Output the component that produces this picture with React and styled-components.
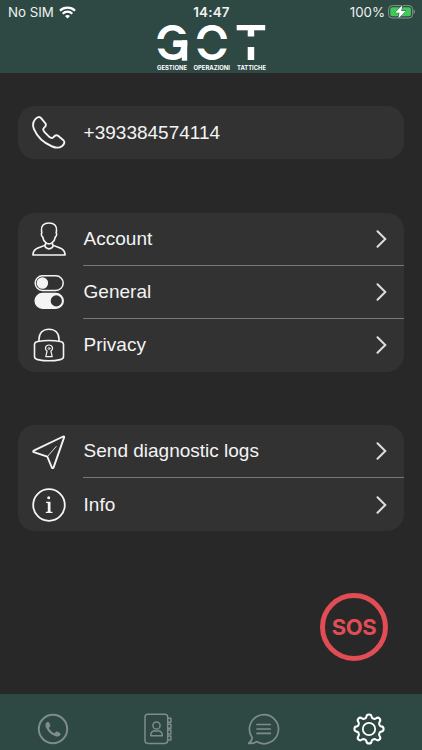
import React, { useState } from "react";
import styled, { createGlobalStyle } from "styled-components";

const GlobalStyle = createGlobalStyle`
  * {
    box-sizing: border-box;
  }
  body {
    margin: 0;
    background: #282828;
  }
`;

const Screen = styled.div`
  display: flex;
  flex-direction: column;
  width: 422px;
  height: 750px;
  overflow: hidden;
  background: #282828;
  font-family: "Liberation Sans", Arial, sans-serif;
  color: #f4f4f4;
`;

const Header = styled.header`
  display: flex;
  flex-direction: column;
  align-items: center;
  height: 73px;
  background: #2e4843;
`;

const StatusBar = styled.div`
  display: grid;
  grid-template-columns: 1fr auto 1fr;
  align-items: center;
  width: 100%;
  height: 24px;
  padding: 0 7px 0 8px;
  font-family: Inter, sans-serif;
  font-size: 13.3px;
  color: #eef2f1;
`;

const Carrier = styled.div`
  display: flex;
  align-items: center;
  gap: 5px;
`;

const Clock = styled.div`
  font-size: 13.4px;
  font-weight: 600;
  letter-spacing: 0.2px;
`;

const Battery = styled.div`
  display: flex;
  align-items: center;
  justify-content: flex-end;
  gap: 3px;
`;

const LogoMark = styled.svg`
  display: block;
  overflow: visible;
`;

const Content = styled.main`
  display: flex;
  flex: 1;
  flex-direction: column;
  gap: 53.5px;
  padding: 33px 18px 0;
`;

const Card = styled.section`
  border-radius: 17px;
  background: #323232;
`;

const Row = styled.div`
  display: flex;
  align-items: center;
  height: 53px;
  padding-left: 13px;
`;

const IconBox = styled.div`
  display: flex;
  align-items: center;
  justify-content: center;
  width: 35px;
  height: 36px;
  margin-right: 17px;
`;

const RowBody = styled.div`
  display: flex;
  flex: 1;
  align-items: center;
  justify-content: space-between;
  height: 100%;
  padding: 0 17px 0 0.6px;
  border-bottom: ${(props) => (props.$divider ? "1px solid #777" : "none")};
  font-size: 19px;
`;

const SosRow = styled.div`
  display: flex;
  justify-content: flex-end;
  margin-top: 8.5px;
  padding-right: 16px;
`;

const SosButton = styled.button`
  width: 68px;
  height: 68px;
  padding: 0;
  border: 5px solid #e24c55;
  border-radius: 50%;
  background: transparent;
  color: #e24c55;
  font-family: Inter, sans-serif;
  font-size: 22px;
  font-weight: 700;
  letter-spacing: -0.5px;
`;

const TabBar = styled.nav`
  display: grid;
  grid-template-columns: repeat(4, 1fr);
  height: 56px;
  padding-top: 19px;
  background: #2e4843;
`;

const Tab = styled.button`
  display: flex;
  justify-content: center;
  align-items: flex-start;
  padding: 0;
  border: none;
  background: none;
  color: ${(props) => (props.$active ? "#ffffff" : "#7f8c89")};
`;

const Icon = ({ size = 34, width = 1.6, children }) => (
  <svg
    width={size}
    height={size}
    viewBox={`0 0 ${size} ${size}`}
    fill="none"
    stroke="currentColor"
    strokeWidth={width}
    strokeLinecap="round"
    strokeLinejoin="round"
  >
    {children}
  </svg>
);

const WifiIcon = () => (
  <svg width="17" height="13" viewBox="0 0 17 13" fill="none" stroke="#fff" strokeWidth="2.3">
    <path d="M1 4.7C5.1.7 11.9.7 16 4.7M3.7 7.7c2.7-2.7 6.9-2.7 9.6 0" />
    <path d="M8.5 12.5 6 10c1.4-1.3 3.6-1.3 5 0z" fill="#fff" stroke="none" />
  </svg>
);

const BatteryIcon = () => (
  <svg width="27" height="14" viewBox="0 0 27 14">
    <rect x="0.6" y="0.6" width="24" height="12.4" rx="3.6" fill="none" stroke="#87958f" />
    <path d="M25.6 4.6c1.7.7 1.700 3.700 0 4.400z" fill="#87958f" />
    <rect x="2.3" y="2.3" width="20.6" height="9" rx="2" fill="#40ca5b" />
    <path
      d="M14.4.2 7 7.7h4.5L10.3 13.6 18 6h-4.7z"
      fill="#fff"
      stroke="#2e4843"
      strokeWidth="1"
      paintOrder="stroke"
    />
  </svg>
);

// wordmark with a slot cut through the middle of every letter
const Logo = () => (
  <LogoMark width="112" height="48" viewBox="155 24 112 48">
    <g fill="#fff" fontFamily="Inter, sans-serif" fontSize="47.5" fontWeight="600">
      <text x="154.8" y="60.3" textLength="34.5" lengthAdjust="spacingAndGlyphs">G</text>
      <text x="194.4" y="60.3" textLength="35" lengthAdjust="spacingAndGlyphs">O</text>
      <text x="234.8" y="60.3" textLength="32.4" lengthAdjust="spacingAndGlyphs">T</text>
    </g>
    <g fill="#2e4843">
      <rect x="154" y="39" width="18" height="9.5" />
      <rect x="172" y="34" width="18" height="6.3" />
      <rect x="194" y="39" width="36" height="9.5" />
      <rect x="240" y="36.5" width="24" height="10.5" />
    </g>
    <g fill="#fff">
      <rect x="173.5" y="40.3" width="13.7" height="5.2" />
      <rect x="181.8" y="40.3" width="5.4" height="20.4" />
    </g>
    <g fill="#fff" fontFamily="Inter, sans-serif" fontSize="5.7" fontWeight="700">
      <text x="157" y="70" textLength="30" lengthAdjust="spacingAndGlyphs">GESTIONE</text>
      <text x="193.5" y="70" textLength="36.5" lengthAdjust="spacingAndGlyphs">OPERAZIONI</text>
      <text x="237" y="70" textLength="29" lengthAdjust="spacingAndGlyphs">TATTICHE</text>
    </g>
  </LogoMark>
);

const PhoneIcon = () => (
  <Icon width={1.9}>
    <path d="M3 3.5C5 .8 7.6.2 9.3 2.3l4.2 5.2c1.3 1.8-.2 3.3-1.7 4.6-1.2 1.1-.5 2.6 1 4.3l4 4c1.8 1.5 3.2 2.2 4.4.9 1.3-1.5 2.8-2.9 4.6-1.7l5.3 4.3c2.1 1.8 1.4 4.3-1.2 6.3-2.4 1.8-5.600 2-9.700.3C11.200 26.800 4.800 20 2 13.200.4 9.200 1 5.900 3 3.500z" />
  </Icon>
);

const AccountIcon = () => (
  <Icon width={1.6}>
    <path d="M17 1c-5.300 0-8 2.900-7.500 7.700l.3 2.500c-.9.700-.3 3.300.9 3.800.4 2.500 1.300 4.100 2.900 5.300v2.300c-2.400 3-12.400 1.700-12.700 10.400h32.200c-.3-8.700-10.300-7.400-12.700-10.400v-2.300c1.600-1.200 2.500-2.800 2.900-5.300 1.200-.5 1.800-3.100.9-3.800l.3-2.500C25 3.900 22.300 1 17 1z" />
    <path d="M13.8 20.5c2.200 2 4.200 2 6.400 0M12.7 23.6c1.3 4.3 7.3 4.3 8.6 0" />
  </Icon>
);

const GeneralIcon = () => (
  <Icon width={1.5}>
    <rect x="3.2" y="0.8" width="28" height="14.6" rx="7.3" />
    <circle cx="10.4" cy="8.1" r="5" fill="currentColor" />
    <rect x="3.2" y="18.6" width="28" height="14.6" rx="7.3" fill="currentColor" />
    <circle cx="24.3" cy="25.9" r="5.6" fill="#323232" stroke="none" />
  </Icon>
);

const PrivacyIcon = () => (
  <Icon width={1.6}>
    <path d="M7 13.2v-1.7C7 5 11 1.2 17 1.2S27 5 27 11.5v1.7" />
    <path d="M5.700 13.500c7-1.300 15.600-1.300 22.600 0 2 .4 3.200 1.200 3.200 3v12c0 1.800-1.200 2.700-3.200 3.100-7 1.500-15.600 1.500-22.600 0-2-.4-3.200-1.300-3.200-3.100v-12c0-1.800 1.200-2.600 3.200-3z" />
    <path
      strokeWidth="1.2"
      d="M17 17c-3.600 0-4.800 4-1.900 6l-1.300 5.700h6.400L18.900 23c2.900-2 1.700-6-1.900-6z"
    />
    <circle cx="17" cy="20.5" r="1" strokeWidth="0.8" />
  </Icon>
);

const SendIcon = () => (
  <Icon width={1.9}>
    <path d="M31.200 1.500 1.700 15.700c-.8.500-.8 1.200.1 1.500l13.500 4.500 4.500 10.800c.5.900 1.500.8 1.800-.1L32.100 2.400c.2-.8-.3-1.200-.9-.9z" />
    <path d="m15.5 21.500 8.700-10" strokeWidth="0.9" />
  </Icon>
);

const InfoIcon = () => (
  <Icon width={1.8}>
    <circle cx="17" cy="17" r="15.8" />
    <circle cx="16.7" cy="9.8" r="1.5" fill="currentColor" stroke="none" />
    <path
      d="M14 13.800h4.500v9.800l2 .5v1h-6.700v-1l2-.5v-8.300l-1.800-.5z"
      fill="currentColor"
      stroke="none"
    />
  </Icon>
);

const Chevron = () => (
  <svg width="11" height="18" viewBox="0 0 11 18" fill="none" stroke="#dedede" strokeWidth="2">
    <path d="M1.500 1.300 9.300 9l-7.800 7.700" strokeLinecap="round" />
  </svg>
);

const CallsIcon = () => (
  <Icon size={32} width={2}>
    <circle cx="16" cy="16" r="14.2" />
    <path
      d="M9.500 9.500c1-.9 2-1 2.700.2l1.100 2.400c.3 1-.1 1.500-.9 2.100-.7.600-.4 1.200.2 2.100 1 1.500 2.200 2.600 3.700 3.400.9.500 1.500.4 2-.3.600-.8 1.100-1.200 2-.8l2.500 1.300c1.100.7 1 1.600.1 2.500-1.200 1.300-2.800 1.300-5 .5-4.100-1.500-7.200-4.500-8.900-8.500-.8-2-.9-3.600.5-4.900z"
      fill="currentColor"
      stroke="none"
    />
  </Icon>
);

const ContactsIcon = () => (
  <Icon size={32} width={1.5}>
    <rect x="3" y="1.2" width="22.7" height="29.2" rx="2.8" />
    <path d="M25.700 5.300h3.200v4h-3.200M25.700 11.200h3.200v4h-3.200M25.700 17.100h3.200v4h-3.200M25.700 23h3.200v4h-3.200" />
    <circle cx="14.5" cy="12.5" r="3.6" />
    <path d="M8.700 22.800c0-3.200 1.800-4.900 3.900-5.100 1.300.7 2.500.7 3.800 0 2.100.2 3.900 1.900 3.900 5.100z" />
  </Icon>
);

const ChatIcon = () => (
  <Icon size={32} width={1.7}>
    <path d="M4.100 24.500A14.500 14.500 0 1 1 8.500 28.600c-2.300 1.700-5.100 2.100-7.700 1.700 2.100-1.500 3.300-3.300 3.300-5.800z" />
    <path d="M9 11.500h13.300M9 16h13.300M9 20.400h13.300" />
  </Icon>
);

// eight rounded teeth around a ring
const SettingsIcon = () => (
  <Icon size={32} width={1.8}>
    <circle cx="16" cy="16" r="6.2" />
    <path
      transform="translate(16 16) scale(1.14) translate(-16 -14)"
      d="M12.500 4.800c.9-.3 1.100-.8 1.200-1.500.2-2.800 4.400-2.800 4.600 0 .1.700.3 1.200 1.200 1.500 1 .4 1.700.6 2.500 0 2.500-1.900 5.100.7 3.200 3.200-.6.800-.4 1.500 0 2.500.3.900.8 1.100 1.500 1.200 2.800.2 2.800 4.400 0 4.600-.7.100-1.200.3-1.500 1.200-.4 1-.6 1.700 0 2.500 1.900 2.500-.7 5.100-3.200 3.200-.8-.6-1.500-.4-2.500 0-.9.3-1.100.8-1.200 1.500-.2 2.800-4.400 2.800-4.600 0-.1-.7-.3-1.200-1.200-1.500-1-.4-1.700-.6-2.500 0-2.500 1.900-5.100-.7-3.200-3.200.6-.8.4-1.500 0-2.500-.3-.9-.8-1.100-1.500-1.200-2.800-.2-2.800-4.400 0-4.600.7-.1 1.200-.3 1.500-1.200.4-1 .6-1.700 0-2.500C4.900 5.500 7.500 2.900 10 4.800c.8.6 1.500.4 2.500 0z"
    />
  </Icon>
);

const groups = [
  [{ icon: PhoneIcon, label: "+393384574114" }],
  [
    { icon: AccountIcon, label: "Account", link: true },
    { icon: GeneralIcon, label: "General", link: true },
    { icon: PrivacyIcon, label: "Privacy", link: true },
  ],
  [
    { icon: SendIcon, label: "Send diagnostic logs", link: true },
    { icon: InfoIcon, label: "Info", link: true },
  ],
];

const tabs = [
  { id: "calls", icon: CallsIcon },
  { id: "contacts", icon: ContactsIcon },
  { id: "chat", icon: ChatIcon },
  { id: "settings", icon: SettingsIcon },
];

const App = () => {
  const [activeTab, setActiveTab] = useState("settings");

  return (
    <Screen>
      <GlobalStyle />
      <Header>
        <StatusBar>
          <Carrier>
            No SIM <WifiIcon />
          </Carrier>
          <Clock>14:47</Clock>
          <Battery>
            100% <BatteryIcon />
          </Battery>
        </StatusBar>
        <Logo />
      </Header>
      <Content>
        {groups.map((rows) => (
          <Card key={rows[0].label}>
            {rows.map(({ icon: RowIcon, label, link }, i) => (
              <Row key={label}>
                <IconBox>
                  <RowIcon />
                </IconBox>
                <RowBody $divider={i < rows.length - 1}>
                  {label}
                  {link && <Chevron />}
                </RowBody>
              </Row>
            ))}
          </Card>
        ))}
        <SosRow>
          <SosButton>SOS</SosButton>
        </SosRow>
      </Content>
      <TabBar>
        {tabs.map(({ id, icon: TabIcon }) => (
          <Tab
            key={id}
            aria-label={id}
            $active={id === activeTab}
            onClick={() => setActiveTab(id)}
          >
            <TabIcon />
          </Tab>
        ))}
      </TabBar>
    </Screen>
  );
};

export default App;
